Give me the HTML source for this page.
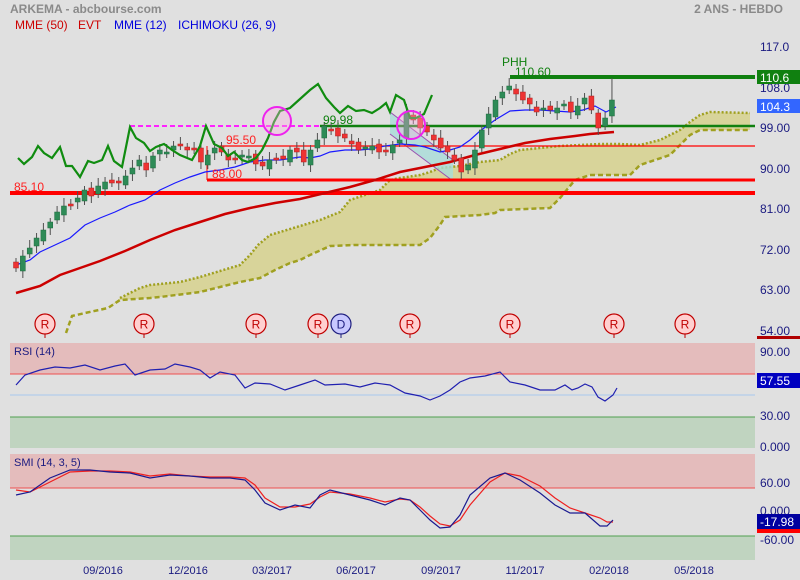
<!DOCTYPE html>
<html><head><meta charset="utf-8"><style>
html,body{margin:0;padding:0;background:#e0e0e0;}
svg{display:block;font-family:"Liberation Sans",Arial,sans-serif;}
</style></head><body>
<svg id="s" width="800" height="580" viewBox="0 0 800 580" xmlns="http://www.w3.org/2000/svg">
<rect width="800" height="580" fill="#e0e0e0"/>
<text x="10" y="13" font-size="12" font-weight="bold" fill="#8a8a8a">ARKEMA - abcbourse.com</text>
<text x="783" y="13" font-size="12" font-weight="bold" fill="#8a8a8a" text-anchor="end">2 ANS - HEBDO</text>
<text x="15" y="29" font-size="12" fill="#cc0000">MME (50)</text>
<text x="78" y="29" font-size="12" fill="#cc0000">EVT</text>
<text x="114" y="29" font-size="12" fill="#0000dd">MME (12)</text>
<text x="178" y="29" font-size="12" fill="#0000dd">ICHIMOKU (26, 9)</text>

<!-- cloud -->
<polygon fill="#d8d49a" points="66,333 72,316 85,313 108,308 120,298 140,288 150,285 180,282 200,277 240,265 250,255 258,245 270,235 300,226 320,220 340,212 350,200 380,190 390,180 400,178 420,175 430,172 440,168 460,166 480,162 500,160 510,154 520,150 540,148 560,146 580,145 600,144 620,144 640,145 660,140 680,130 690,122 700,115 710,112 750,113 750,130 700,130 690,135 670,155 640,165 630,175 590,175 575,180 560,198 550,208 500,210 495,213 480,215 445,217 440,225 430,238 420,245 355,245 330,246 310,255 300,260 290,263 275,270 260,278 240,282 200,292 160,297 150,298 120,300 108,308 85,313 72,316"/>
<polyline fill="none" stroke="#a0a020" stroke-width="2.5" stroke-dasharray="2,2" points="120,298 140,288 150,285 180,282 200,277 240,265 250,255 258,245 270,235 300,226 320,220 340,212 350,200 380,190 390,180 400,178 420,175 430,172 440,168 460,166 480,162 500,160 510,154 520,150 540,148 560,146 580,145 600,144 620,144 640,145 660,140 680,130 690,122 700,115 710,112 750,113"/>
<polyline fill="none" stroke="#a0a020" stroke-width="2.5" stroke-dasharray="5,3" points="66,333 72,316 85,313 108,308 120,300 150,298 160,297 200,292 240,282 260,278 275,270 290,263 300,260 310,255 330,246 355,245 420,245 430,238 440,225 445,217 480,215 495,213 500,210 550,208 560,198 575,180 590,175 630,175 640,165 670,155 690,135 700,130 750,130"/>

<!-- channel -->
<polygon fill="#a8dcd8" opacity="0.8" points="390,112 453,160 453,181 390,134"/>
<line x1="390" y1="112" x2="453" y2="160" stroke="#9a50b0" stroke-width="1"/>
<line x1="390" y1="134" x2="453" y2="181" stroke="#9a50b0" stroke-width="1"/>

<!-- horizontal lines -->
<line x1="10" y1="193" x2="755" y2="193" stroke="#ff0000" stroke-width="4"/>
<line x1="207" y1="180" x2="755" y2="180" stroke="#ff0000" stroke-width="3"/>
<line x1="220" y1="146" x2="755" y2="146" stroke="#ff0000" stroke-width="1.2"/>
<line x1="130" y1="126" x2="320" y2="126" stroke="#ff22ff" stroke-width="2" stroke-dasharray="5,3"/>
<line x1="320" y1="126" x2="755" y2="126" stroke="#108010" stroke-width="2.5"/>
<line x1="510" y1="77" x2="755" y2="77" stroke="#108010" stroke-width="4"/>
<line x1="207" y1="146" x2="207" y2="180" stroke="#ff0000" stroke-width="1"/>

<!-- MME50 -->
<polyline fill="none" stroke="#cc0000" stroke-width="2.5" points="16,293 40,286 60,275 80,268 100,261 125,251 150,240 175,230 200,222 225,214 250,208 275,203 300,199 325,193 350,187 375,180 400,172 425,167 450,162 475,155 500,149 525,143 550,139 575,136 590,134 614,132"/>
<!-- MME12 -->
<polyline fill="none" stroke="#1a1aff" stroke-width="1.2" points="16,265 30,260 40,252 55,245 70,238 85,225 100,218 115,212 130,205 145,200 160,190 175,183 190,177 205,172 220,170 235,167 250,162 265,160 280,160 300,157 310,158 320,156 330,152 345,150 360,150 370,149 385,146 400,144 415,145 425,147 440,152 450,150 460,147 470,140 480,131 495,120 510,111 525,110 540,110 555,111 570,112 583,110 595,106 606,112 616,107"/>
<g id="candles"></g>
<!-- EVT -->
<polyline fill="none" stroke="#108c10" stroke-width="2.2" points="18,158 24,164 32,157 38,146 44,153 52,158 60,147 66,166 72,166 80,177 88,161 94,163 102,160 108,146 114,161 122,167 130,127 136,138 144,143 150,151 156,147 164,144 172,150 180,155 192,160 200,146 206,126 214,144 222,148 228,156 234,152 242,160 248,162 256,158 262,150 268,138 274,122 280,111 290,108 300,99 310,90 318,84 326,98 334,107 340,113 348,106 356,111 364,110 372,113 380,108 386,103 390,112 396,95 404,100 410,118 416,118 424,114 432,95"/>
<circle cx="277" cy="121" r="14" fill="#ffb0e0" fill-opacity="0.35" stroke="#ee22ee" stroke-width="2"/>
<circle cx="411" cy="125" r="14" fill="#ffb0e0" fill-opacity="0.35" stroke="#ee22ee" stroke-width="2"/>

<g font-size="12">
<text x="502" y="66" fill="#108010">PHH</text>
<text x="515" y="76" fill="#108010">110.60</text>
<text x="323" y="124" fill="#108010">99.98</text>
<text x="226" y="144" fill="#ff2020">95.50</text>
<text x="212" y="178" fill="#ff2020">88.00</text>
<text x="14" y="191" fill="#ff2020">85.10</text>
</g>

<!-- markers -->
<g id="marks" font-size="12" text-anchor="middle"></g>

<!-- right scale -->
<g font-size="12" fill="#1a1a80">
<text x="760" y="51">117.0</text>
<text x="760" y="92">108.0</text>
<text x="760" y="132">99.00</text>
<text x="760" y="173">90.00</text>
<text x="760" y="213">81.00</text>
<text x="760" y="254">72.00</text>
<text x="760" y="294">63.00</text>
<text x="760" y="335">54.00</text>
<text x="760" y="356">90.00</text>
<text x="760" y="420">30.00</text>
<text x="760" y="451">0.000</text>
<text x="760" y="487">60.00</text>
<text x="760" y="515">0.000</text>
<text x="760" y="544">-60.00</text>
</g>
<rect x="757" y="70" width="43" height="14" fill="#108010"/>
<text x="760" y="82" font-size="12" fill="#fff">110.6</text>
<rect x="757" y="99" width="43" height="14" fill="#3366ff"/>
<text x="760" y="111" font-size="12" fill="#fff">104.3</text>
<rect x="757" y="336" width="43" height="3" fill="#b00000"/>

<!-- RSI -->
<rect x="10" y="343" width="745" height="31" fill="#e4bcbc"/>
<line x1="10" y1="374" x2="755" y2="374" stroke="#ee5050" stroke-width="1"/>
<line x1="10" y1="395" x2="755" y2="395" stroke="#a8c8ee" stroke-width="1"/>
<rect x="10" y="417" width="745" height="31" fill="#c0d4c0"/>
<line x1="10" y1="417" x2="755" y2="417" stroke="#50a050" stroke-width="1"/>
<text x="14" y="355" font-size="11" fill="#1a1a80">RSI (14)</text>
<polyline fill="none" stroke="#2020b0" stroke-width="1.2" points="16,385 25,375 40,370 55,367 70,368 85,365 100,370 115,366 125,364 135,375 150,370 165,369 175,364 190,367 200,370 210,378 220,372 235,375 245,388 255,383 270,384 285,390 300,385 315,380 325,385 345,384 360,387 375,383 390,385 405,393 420,396 430,400 440,396 450,390 460,382 470,378 485,376 500,372 510,382 525,385 540,390 555,390 565,385 572,390 578,388 585,384 592,387 598,397 605,401 613,395 617,388"/>
<rect x="757" y="373" width="43" height="15" fill="#0000c0"/>
<text x="760" y="385" font-size="12" fill="#fff">57.55</text>

<!-- SMI -->
<rect x="10" y="454" width="745" height="34" fill="#e4bcbc"/>
<line x1="10" y1="488" x2="755" y2="488" stroke="#ee5050" stroke-width="1"/>
<rect x="10" y="536" width="745" height="24" fill="#c0d4c0"/>
<line x1="10" y1="536" x2="755" y2="536" stroke="#50a050" stroke-width="1"/>
<text x="14" y="466" font-size="11" fill="#1a1a80">SMI (14, 3, 5)</text>
<polyline fill="none" stroke="#ee2020" stroke-width="1.2" points="16,490 30,492 50,482 70,472 90,471 110,471 130,472 150,476 170,474 190,476 210,477 230,477 245,478 255,485 265,498 280,507 295,507 310,504 320,497 330,492 350,494 370,498 385,502 400,499 410,500 420,507 430,516 440,524 450,526 460,520 470,505 490,482 505,473 520,476 540,486 555,498 570,508 585,513 600,518 607,522 613,522"/>
<polyline fill="none" stroke="#1a1a90" stroke-width="1.2" points="16,495 30,492 50,478 70,470 90,470 110,472 130,473 150,478 170,475 190,476 210,478 230,478 245,480 255,490 265,503 280,510 295,505 310,508 320,495 330,490 350,495 370,500 385,505 400,498 410,500 420,510 430,520 440,528 450,527 460,515 470,495 490,478 505,473 520,480 540,493 555,505 570,513 585,513 600,526 607,526 613,520"/>
<rect x="757" y="514" width="43" height="15" fill="#0000a0"/>
<text x="760" y="526" font-size="12" fill="#fff">-17.98</text>
<rect x="757" y="529" width="43" height="4" fill="#ff0000"/>

<!-- x axis -->
<g font-size="11" fill="#1a1a80" text-anchor="middle">
<text x="103" y="574">09/2016</text>
<text x="188" y="574">12/2016</text>
<text x="272" y="574">03/2017</text>
<text x="356" y="574">06/2017</text>
<text x="441" y="574">09/2017</text>
<text x="525" y="574">11/2017</text>
<text x="609" y="574">02/2018</text>
<text x="694" y="574">05/2018</text>
</g>
</svg>
<script>
(function(){
var NS="http://www.w3.org/2000/svg";
var g=document.getElementById("candles");
function el(t,a){var e=document.createElementNS(NS,t);for(var k in a)e.setAttribute(k,a[k]);return e;}
// closes in px (y) per candle
var c=[268,256,248,238,230,222,212,206,204,198,190,196,186,182,183,182,176,168,160,170,156,150,152,146,144,150,150,162,155,148,152,160,158,155,156,164,166,160,158,159,150,152,162,150,140,126,130,136,138,144,150,147,146,152,150,145,140,112,120,128,132,140,148,152,160,172,165,150,130,114,100,92,86,94,100,104,112,108,110,108,104,112,106,98,110,128,118,100];
var x0=16,dx=6.85;
var o=262;
for(var i=0;i<c.length;i++){
 var x=x0+i*dx, cl=c[i];
 var up=cl<o;
 var top=Math.min(o,cl),bot=Math.max(o,cl);
 if(bot-top<2)bot=top+2;
 var hi=top-4-(i*7%5),lo=bot+4+(i*3%6);
 if(i==c.length-1)hi=78;
 g.appendChild(el("line",{x1:x,y1:hi,x2:x,y2:lo,stroke:"#505050","stroke-width":1}));
 g.appendChild(el("rect",{x:x-2.5,y:top,width:5,height:bot-top,fill:up?"#2e8b57":"#ee3333",stroke:up?"#1e6b3f":"#b02020","stroke-width":0.5}));
 o=cl+(i%3==0?3:-2);
}
var m=document.getElementById("marks");
var pts=[[45,"R"],[144,"R"],[256,"R"],[318,"R"],[341,"D"],[410,"R"],[510,"R"],[614,"R"],[685,"R"]];
pts.forEach(function(p){
 var d=p[1]=="D";
 m.appendChild(el("line",{x1:p[0],y1:334,x2:p[0],y2:338,stroke:d?"#202080":"#c00000"}));
 m.appendChild(el("circle",{cx:p[0],cy:324,r:10,fill:d?"#c8c8ff":"#ffd0d0",stroke:d?"#202080":"#c00000","stroke-width":1.2}));
 var t=el("text",{x:p[0],y:328.5,fill:d?"#202080":"#c00000"});t.textContent=p[1];m.appendChild(t);
});
})();
</script>
</body></html>
